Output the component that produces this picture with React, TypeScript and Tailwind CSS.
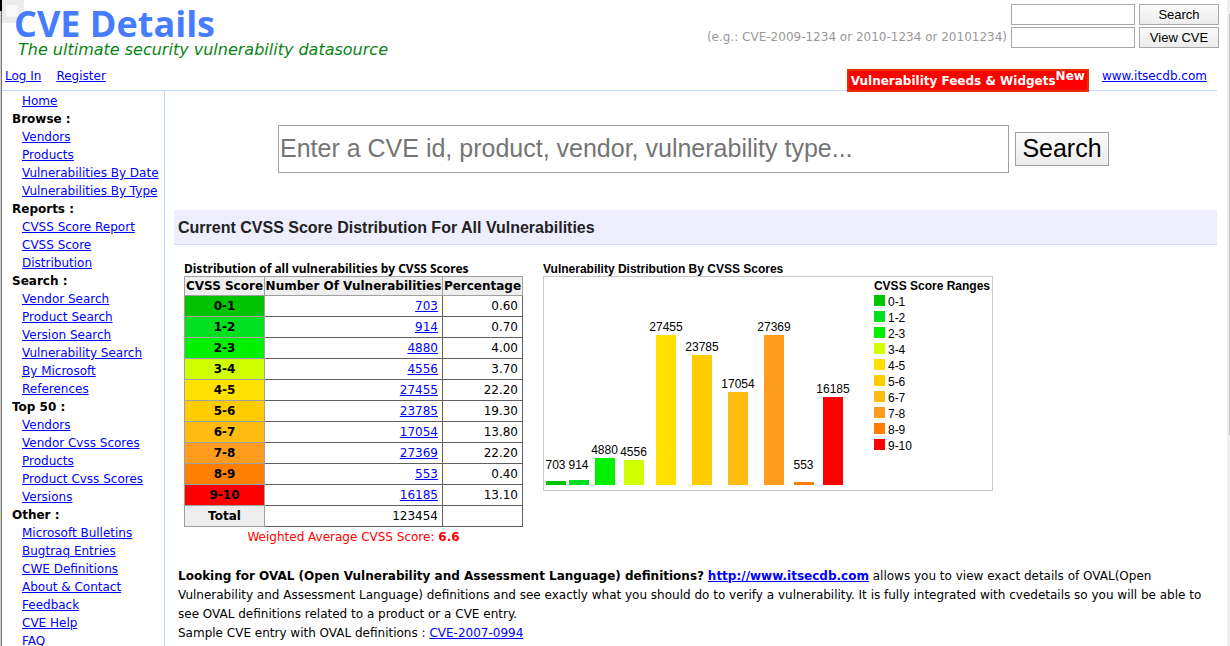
import React from "react";

type Score = { range: string; count: number; pct: string; color: string; bar: number; slot: string; label: string };

const scores: Score[] = [
  { range: "0-1", count: 703, pct: "0.60", color: "bg-[#00c400]", bar: 4, slot: "w-[23px]", label: "mb-2.5" },
  { range: "1-2", count: 914, pct: "0.70", color: "bg-[#00e020]", bar: 5, slot: "w-[23px]", label: "mb-[9px]" },
  { range: "2-3", count: 4880, pct: "4.00", color: "bg-[#00f000]", bar: 27, slot: "w-[29px]", label: "mb-0.5" },
  { range: "3-4", count: 4556, pct: "3.70", color: "bg-[#d1ff00]", bar: 25, slot: "w-[29px]", label: "mb-0.5" },
  { range: "4-5", count: 27455, pct: "22.20", color: "bg-[#ffe000]", bar: 150, slot: "w-[36px]", label: "mb-0.5" },
  { range: "5-6", count: 23785, pct: "19.30", color: "bg-[#ffcc00]", bar: 130, slot: "w-[36px]", label: "mb-0.5" },
  { range: "6-7", count: 17054, pct: "13.80", color: "bg-[#ffbc10]", bar: 93, slot: "w-[36px]", label: "mb-0.5" },
  { range: "7-8", count: 27369, pct: "22.20", color: "bg-[#ff9c20]", bar: 150, slot: "w-[36px]", label: "mb-0.5" },
  { range: "8-9", count: 553, pct: "0.40", color: "bg-[#ff8000]", bar: 3, slot: "w-[23px]", label: "mb-[11px]" },
  { range: "9-10", count: 16185, pct: "13.10", color: "bg-[#ff0000]", bar: 88, slot: "w-[36px]", label: "mb-0.5" },
];

const menu: { title?: string; links: string[] }[] = [
  { links: ["Home"] },
  { title: "Browse :", links: ["Vendors", "Products", "Vulnerabilities By Date", "Vulnerabilities By Type"] },
  { title: "Reports :", links: ["CVSS Score Report", "CVSS Score Distribution"] },
  { title: "Search :", links: ["Vendor Search", "Product Search", "Version Search", "Vulnerability Search", "By Microsoft References"] },
  { title: "Top 50 :", links: ["Vendors", "Vendor Cvss Scores", "Products", "Product Cvss Scores", "Versions"] },
  { title: "Other :", links: ["Microsoft Bulletins", "Bugtraq Entries", "CWE Definitions", "About & Contact", "Feedback", "CVE Help", "FAQ"] },
];

const link = "text-[#0000ff] underline";
const smallInput = "h-[21px] w-[124px] border border-[#a9a9a9] bg-white px-1 outline-none";
const smallButton =
  "h-[21px] w-[80px] border border-[#a9a9a9] bg-linear-to-b from-[#fbfbfb] to-[#ececec] text-center font-['Liberation_Sans',sans-serif] text-[13px] leading-4 text-black";

function Header() {
  return (
    <header className="mr-2.5 flex h-[91px] justify-between border-b border-[#c0d8ff]">
      <div className="flex flex-col">
        <h1 className="pt-1.5 pl-3 font-['Open_Sans','Noto_Sans',sans-serif] text-[36px] leading-9 font-bold text-[#467dff]">
          CVE Details
        </h1>
        <p className="pl-4 text-[16px] leading-4 text-[#0a8414] italic font-['Segoe_Print','Ink_Free','DejaVu_Sans',sans-serif]">
          The ultimate security vulnerability datasource
        </p>
        <nav className="mt-2.5 flex gap-[15px] pl-[3px] leading-4">
          <a href="#login" className={link}>Log In</a>
          <a href="#register" className={link}>Register</a>
        </nav>
      </div>
      <div className="flex flex-col items-end">
        <form className="-mr-0.5 flex flex-col items-end gap-0.5 pt-1">
          <div className="flex gap-1">
            <input aria-label="Search term" className={smallInput} />
            <button type="button" className={smallButton}>Search</button>
          </div>
          <div className="flex gap-1">
            <label htmlFor="cve" className="leading-[21px] text-[#999999]">
              (e.g.: CVE-2009-1234 or 2010-1234 or 20101234)
            </label>
            <input id="cve" className={smallInput} />
            <button type="button" className={smallButton}>View CVE</button>
          </div>
        </form>
        <div className="mt-[21px] mr-2.5 flex h-[23px] items-start gap-[13px]">
          <a href="#feeds" className="flex h-[23px] border-2 border-[#e03000] bg-[#ff0000] px-0.5 font-bold text-white">
            <span className="leading-5">Vulnerability Feeds &amp; Widgets</span>
            <span className="leading-[10px]">New</span>
          </a>
          <a href="#itsecdb" className={"leading-[14px] " + link}>www.itsecdb.com</a>
        </div>
      </div>
    </header>
  );
}

function Sidebar() {
  return (
    <nav className="w-[163px] shrink-0 border-r border-[#c0d8ff] pt-px leading-[18px]">
      {menu.map((group, i) => (
        <section key={i}>
          {group.title && <h2 className="pl-2.5 font-bold">{group.title}</h2>}
          <ul className="pr-[3px] pl-5">
            {group.links.map((text) => (
              <li key={text}><a href="#menu" className={link}>{text}</a></li>
            ))}
          </ul>
        </section>
      ))}
    </nav>
  );
}

function ScoreTable() {
  const value = "border border-[#606060] pr-1 text-right";
  return (
    <div className="w-[339px]">
      <table className="w-full border-collapse leading-[18px]">
        <caption className="text-left font-['Noto_Sans',sans-serif] leading-[14px] font-bold">
          Distribution of all vulnerabilities by CVSS Scores
        </caption>
        <thead>
          <tr className="h-[19px] bg-[#eeeeee]">
            <th className="w-[80px] border border-[#a0a0a0] whitespace-nowrap">CVSS Score</th>
            <th className="border border-[#a0a0a0] whitespace-nowrap">Number Of Vulnerabilities</th>
            <th className="w-[80px] border border-[#a0a0a0] whitespace-nowrap">Percentage</th>
          </tr>
        </thead>
        <tbody>
          {scores.map((s) => (
            <tr key={s.range} className="h-[21px]">
              <th className={"border border-[#a0a0a0] " + s.color}>{s.range}</th>
              <td className={value}><a href="#list" className={link}>{s.count}</a></td>
              <td className={value}>{s.pct}</td>
            </tr>
          ))}
          <tr className="h-[21px]">
            <th className="border border-[#a0a0a0] bg-[#eeeeee]">Total</th>
            <td className={value}>123454</td>
            <td className={value}></td>
          </tr>
        </tbody>
      </table>
      <p className="text-center leading-5 text-[#ff0000]">
        Weighted Average CVSS Score: <b>6.6</b>
      </p>
    </div>
  );
}

function ScoreChart() {
  return (
    <figure className="w-[450px] font-['Liberation_Sans',sans-serif] text-[12px]">
      <figcaption className="leading-[14px] font-bold">Vulnerability Distribution By CVSS Scores</figcaption>
      <div className="flex h-[215px] justify-between border border-[#c8c8c8]">
        <div className="flex items-end pb-[5px]">
          {scores.map((s) => (
            <div key={s.range} className={"flex flex-col items-center " + s.slot}>
              <span className={"leading-[12px] " + s.label}>{s.count}</span>
              <div className={"w-5 " + s.color} style={{ height: s.bar }} />
            </div>
          ))}
        </div>
        <div className="pt-0.5 pr-0.5">
          <h3 className="leading-[14px] font-bold">CVSS Score Ranges</h3>
          <ul>
            {scores.map((s) => (
              <li key={s.range} className="flex h-4 items-start gap-[3px] pt-0.5 leading-[14px]">
                <span className={"size-[11px] " + s.color} />
                {s.range}
              </li>
            ))}
          </ul>
        </div>
      </div>
    </figure>
  );
}

export default function App() {
  return (
    <div className="relative flex h-screen overflow-hidden bg-white font-['DejaVu_Sans',sans-serif] text-[12px] text-black">
      <div className="absolute top-0 left-0.5 h-[23px] w-[22px] bg-[#e9e9e9]/90 pt-[5px] pl-1">
        <div className="size-3 rounded-xs bg-[#f9f9f9]" />
      </div>
      <div className="w-0.5 shrink-0 border-r border-[#707070] bg-[#d0d0d0]">
        <div className="h-[11px] w-0.5 bg-black" />
      </div>
      <div className="relative min-w-0 flex-1">
        <Header />
        <div className="flex">
          <Sidebar />
          <main className="mr-2.5 ml-[9px] min-w-0 flex-1">
            <form className="flex items-center justify-center gap-1.5 pt-[34px] pr-1">
              <input
                aria-label="Search"
                placeholder="Enter a CVE id, product, vendor, vulnerability type..."
                className="h-12 w-[731px] border border-[#a0a0a0] px-px pb-0.5 font-['Liberation_Sans',sans-serif] text-[25px] outline-none placeholder:text-[#757575]"
              />
              <button type="button" className="h-[34px] w-[94px] border border-[#a0a0a0] bg-linear-to-b from-[#fbfbfb] to-[#ececec] pb-0.5 font-['Liberation_Sans',sans-serif] text-[25px] leading-[30px]">
                Search
              </button>
            </form>
            <h2 className="mt-[37px] h-[35px] border-b border-[#d8d8ff] bg-[#eeeeff] pl-1 font-['Liberation_Sans',sans-serif] text-[16px] leading-9 font-bold text-[#222222]">
              Current CVSS Score Distribution For All Vulnerabilities
            </h2>
            <div className="flex gap-5 pt-[17px] pl-2.5">
              <ScoreTable />
              <ScoreChart />
            </div>
            <p className="mt-5 pl-1 leading-[19px]">
              <b>Looking for OVAL (Open Vulnerability and Assessment Language) definitions?</b>{" "}
              <a href="#oval" className={"font-bold " + link}>http://www.itsecdb.com</a>{" "}
              allows you to view exact details of OVAL(Open Vulnerability and Assessment Language) definitions and see exactly what you should do to verify a vulnerability. It is fully integrated with cvedetails so you will be able to see OVAL definitions related to a product or a CVE entry.
              <br />
              Sample CVE entry with OVAL definitions : <a href="#sample" className={link}>CVE-2007-0994</a>
            </p>
          </main>
        </div>
      </div>
      <div className="flex w-[3px] shrink-0 justify-end bg-[#f0f0f0] pt-3.5">
        <div className="h-2/3 w-px bg-[#c0c0c0]" />
      </div>
    </div>
  );
}
